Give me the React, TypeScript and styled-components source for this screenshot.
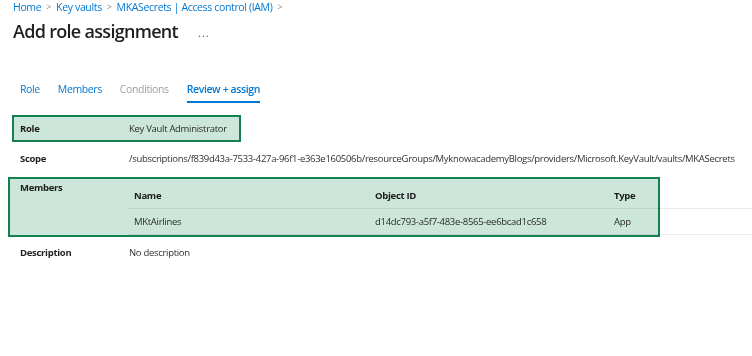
import React from "react";
import styled, { createGlobalStyle } from "styled-components";

const GlobalStyle = createGlobalStyle`
  body {
    margin: 0;
    background: #ffffff;
    font-family: "Open Sans", "Noto Sans", Arial, sans-serif;
    color: #323130;
  }
`;

const Page = styled.div`
  position: relative;
  width: 752px;
  height: 356px;
  overflow: hidden;
  background: #fff;
`;

const Header = styled.div`
  padding: 0 0 0 13px;
`;

const Breadcrumb = styled.nav`
  display: flex;
  align-items: center;
  gap: 5px;
  height: 14px;
  font-size: 10.5px;
  letter-spacing: -0.35px;
  color: #0078d4;
  line-height: 14px;
`;

const Chevron = styled.span`
  color: #8a8886;
  font-size: 9px;
`;

const TitleRow = styled.div`
  display: flex;
  align-items: center;
  gap: 20px;
  margin-top: 5px;
  height: 24px;
`;

const Title = styled.h1`
  margin: 0;
  font-size: 18px;
  font-weight: 600;
  letter-spacing: -0.7px;
  color: #201f1e;
`;

const More = styled.span`
  font-size: 11px;
  color: #605e5c;
  letter-spacing: 1px;
  padding-top: 3px;
`;

const Tabs = styled.div`
  display: flex;
  gap: 18px;
  margin: 38px 0 0 20px;
`;

const Tab = styled.div<{ $active?: boolean; $disabled?: boolean }>`
  font-size: 10.5px;
  letter-spacing: -0.38px;
  line-height: 16px;
  padding-bottom: 4px;
  font-weight: ${(p) => (p.$active ? 600 : 400)};
  color: ${(p) => (p.$disabled ? "#a19f9d" : "#0078d4")};
  border-bottom: 2px solid ${(p) => (p.$active ? "#0078d4" : "transparent")};
`;

const Details = styled.div`
  margin-top: 10px;
  font-size: 9.5px;
  letter-spacing: -0.3px;
`;

const Row = styled.div<{ $gap?: number }>`
  display: grid;
  grid-template-columns: 109px 1fr;
  align-items: center;
  height: 30px;
  padding-left: 20px;
  margin-top: ${(p) => p.$gap ?? 0}px;
`;

const Label = styled.div`
  font-weight: 700;
  color: #201f1e;
`;

const Value = styled.div`
  color: #323130;
  white-space: nowrap;
`;

const MembersRow = styled.div`
  display: grid;
  grid-template-columns: 108px 1fr;
  align-items: start;
  padding-left: 20px;
  margin-top: 3px;
`;

const MembersLabel = styled(Label)`
  padding-top: 5px;
`;

const Table = styled.div`
  display: grid;
  grid-template-columns: 241px 239px 1fr;
  margin-top: 7px;
`;

const Cell = styled.div<{ $head?: boolean }>`
  height: 25px;
  display: flex;
  align-items: center;
  padding-left: 6px;
  font-weight: ${(p) => (p.$head ? 700 : 400)};
  color: ${(p) => (p.$head ? "#201f1e" : "#323130")};
  border-bottom: 1px solid #edebe9;
`;

const Annotation = styled.div`
  position: absolute;
  box-sizing: border-box;
  border: 2px solid #13804f;
  background: #cde6db;
  mix-blend-mode: multiply;
  pointer-events: none;
`;

const columns = ["Name", "Object ID", "Type"];
const member = ["MKtAirlines", "d14dc793-a5f7-483e-8565-ee6bcad1c658", "App"];

export default function App() {
  return (
    <Page>
      <GlobalStyle />
      <Header>
        <Breadcrumb>
          <span>Home</span>
          <Chevron>&gt;</Chevron>
          <span>Key vaults</span>
          <Chevron>&gt;</Chevron>
          <span>MKASecrets | Access control (IAM)</span>
          <Chevron>&gt;</Chevron>
        </Breadcrumb>
        <TitleRow>
          <Title>Add role assignment</Title>
          <More>...</More>
        </TitleRow>
      </Header>

      <Tabs>
        <Tab>Role</Tab>
        <Tab>Members</Tab>
        <Tab $disabled>Conditions</Tab>
        <Tab $active>Review + assign</Tab>
      </Tabs>

      <Details>
        <Row>
          <Label>Role</Label>
          <Value>Key Vault Administrator</Value>
        </Row>
        <Row>
          <Label>Scope</Label>
          <Value>
            /subscriptions/f839d43a-7533-427a-96f1-e363e160506b/resourceGroups/MyknowacademyBlogs/providers/Microsoft.KeyVault/vaults/MKASecrets
          </Value>
        </Row>
        <MembersRow>
          <MembersLabel>Members</MembersLabel>
          <Table>
            {columns.map((c) => (
              <Cell $head key={c}>
                {c}
              </Cell>
            ))}
            {member.map((m) => (
              <Cell key={m}>{m}</Cell>
            ))}
          </Table>
        </MembersRow>
        <Row $gap={2}>
          <Label>Description</Label>
          <Value>No description</Value>
        </Row>
      </Details>

      <Annotation style={{ left: 12, top: 115, width: 229, height: 27 }} />
      <Annotation style={{ left: 8, top: 177, width: 652, height: 60 }} />
    </Page>
  );
}
